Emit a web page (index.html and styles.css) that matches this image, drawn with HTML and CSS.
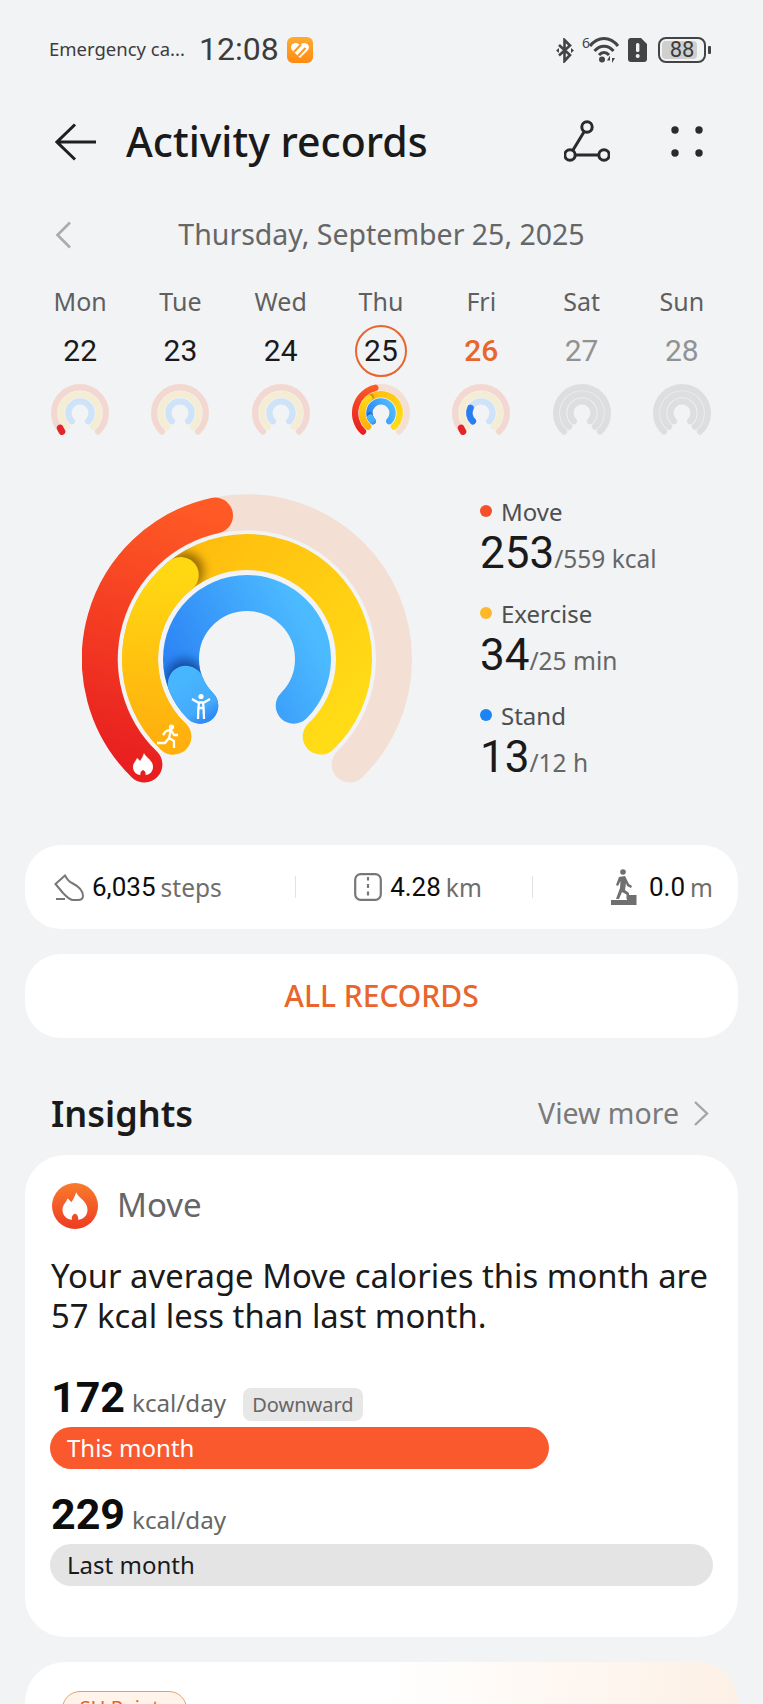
FILE: index.html
```html
<!DOCTYPE html>
<html lang="en">
<head>
    <meta charset="UTF-8">
    <meta name="viewport" content="width=device-width, initial-scale=1.0">
    <title>Activity records</title>
    <link rel="stylesheet" href="styles.css">
</head>
<body>
    <!-- Status bar -->
    <div class="status-bar">
        <span class="carrier">Emergency ca...</span>
        <span class="clock">12:08</span>
        <svg class="app-badge" viewBox="0 0 26 26">
            <defs>
                <linearGradient id="badgeFill" x1="0" y1="0" x2="0" y2="1">
                    <stop offset="0" stop-color="#ffab30"/>
                    <stop offset="1" stop-color="#ff8a12"/>
                </linearGradient>
            </defs>
            <rect width="26" height="26" rx="6" fill="url(#badgeFill)"/>
            <path d="M13 21 L5 13 C2.5 9.5 5.5 5.5 9 6 C11 6.2 12 7 13 8 C14 7 15.5 6 17.5 6 C21 6 23.5 10 21 13 Z" fill="#fff"/>
            <path d="M7 15 L14 7.5 M11 19 L18.5 11" stroke="#ff9a20" stroke-width="2.2"/>
        </svg>
        <div class="status-icons">
            <svg class="ic-bt" viewBox="0 0 18 25">
                <path d="M3 7 L14 17 L8.5 23 V2 L14 7.5 L3 17.5" fill="none" stroke="#444" stroke-width="2.6"/>
                <path d="M0 12.5 L3 10 V15 Z M18 12.5 L15 10 V15 Z" fill="#444"/>
            </svg>
            <svg class="ic-wifi" viewBox="0 0 36 26">
                <text x="0" y="11" class="wifi-six">6</text>
                <path d="M8 9 C16 -1 28 -1 36 9 M12.5 14 C18 7.5 26 7.5 31.5 14 M17 18 C20 14.5 24 14.5 27 18" fill="none" stroke="#444" stroke-width="3"/>
                <circle cx="20" cy="22.5" r="3" fill="#444"/>
                <path d="M28 18.5 L25 23.5 H28 Z M30 26 L33 21 H30 Z" fill="#444"/>
            </svg>
            <svg class="ic-sim" viewBox="0 0 19 24">
                <path d="M3 0 H13 L19 6 V21 C19 23 18 24 16 24 H3 C1 24 0 23 0 21 V3 C0 1 1 0 3 0 Z" fill="#444"/>
                <rect x="8" y="5" width="3.4" height="9" rx="1.5" fill="#f1f3f5"/>
                <circle cx="9.7" cy="18" r="2" fill="#f1f3f5"/>
            </svg>
            <div class="battery">
                <div class="battery-fill"></div>
                <span class="battery-num">88</span>
            </div>
            <div class="battery-nub"></div>
        </div>
    </div>

    <!-- Title bar -->
    <div class="title-bar">
        <svg class="ic-back" viewBox="0 0 42 38">
            <path d="M41 19 H2 M20 1.5 L2 19 L20 36.5" fill="none" stroke="#1f1f1f" stroke-width="3"/>
        </svg>
        <h1 class="title">Activity records</h1>
        <svg class="ic-route" viewBox="0 0 46 44">
            <path d="M23 7 L6 35 H40" fill="none" stroke="#2b2b2b" stroke-width="3"/>
            <circle cx="23" cy="7" r="5.2" fill="#f1f3f5" stroke="#2b2b2b" stroke-width="3"/>
            <circle cx="6" cy="35" r="5.2" fill="#f1f3f5" stroke="#2b2b2b" stroke-width="3"/>
            <circle cx="40" cy="35" r="5.2" fill="#f1f3f5" stroke="#2b2b2b" stroke-width="3"/>
        </svg>
        <svg class="ic-dots" viewBox="0 0 34 34">
            <circle cx="5" cy="5" r="3.7"/>
            <circle cx="29" cy="5" r="3.7"/>
            <circle cx="5" cy="28" r="3.7"/>
            <circle cx="29" cy="28" r="3.7"/>
        </svg>
    </div>

    <div class="date-row">
        <svg class="ic-prev" viewBox="0 0 17 28">
            <path d="M15 1.5 L2.5 14 L15 26.5" fill="none" stroke="#a9abad" stroke-width="2.6"/>
        </svg>
        <span class="date-text">Thursday, September 25, 2025</span>
    </div>

    <!-- Week strip -->
    <div class="week">
        <div class="day">
            <div class="day-name">Mon</div>
            <div class="day-num">22</div>
            <svg class="mini faint" viewBox="0 0 330 290">
                <use href="#ringBase"/>
                <path class="tip-red" d="M62.4 270.5 A147 147 0 0 1 52 250"/>
            </svg>
        </div>
        <div class="day">
            <div class="day-name">Tue</div>
            <div class="day-num">23</div>
            <svg class="mini faint" viewBox="0 0 330 290"><use href="#ringBase"/></svg>
        </div>
        <div class="day">
            <div class="day-name">Wed</div>
            <div class="day-num">24</div>
            <svg class="mini faint" viewBox="0 0 330 290"><use href="#ringBase"/></svg>
        </div>
        <div class="day">
            <div class="day-name">Thu</div>
            <div class="day-num today">25</div>
            <svg class="mini" viewBox="0 0 330 290"><use href="#ringLive"/></svg>
        </div>
        <div class="day">
            <div class="day-name">Fri</div>
            <div class="day-num next">26</div>
            <svg class="mini faint" viewBox="0 0 330 290">
                <use href="#ringBase"/>
                <path class="tip-red" d="M62.4 270.5 A147 147 0 0 1 52 250"/>
                <path class="tip-blue" d="M118.3 211.7 A66 66 0 0 1 105 137"/>
            </svg>
        </div>
        <div class="day">
            <div class="day-name">Sat</div>
            <div class="day-num later">27</div>
            <svg class="mini blank" viewBox="0 0 330 290"><use href="#ringBase"/></svg>
        </div>
        <div class="day">
            <div class="day-name">Sun</div>
            <div class="day-num later">28</div>
            <svg class="mini blank" viewBox="0 0 330 290"><use href="#ringBase"/></svg>
        </div>
    </div>

    <!-- Rings and goals -->
    <div class="activity">
        <svg class="rings" viewBox="0 0 330 290">
            <defs>
                <linearGradient id="redFill" gradientUnits="userSpaceOnUse" x1="60" y1="275" x2="135" y2="20">
                    <stop offset="0" stop-color="#e81f20"/>
                    <stop offset="1" stop-color="#ff5a25"/>
                </linearGradient>
                <linearGradient id="yellowBase" gradientUnits="userSpaceOnUse" x1="80" y1="70" x2="250" y2="240">
                    <stop offset="0" stop-color="#ffbb0e"/>
                    <stop offset="1" stop-color="#ffdc16"/>
                </linearGradient>
                <linearGradient id="yellowTop" gradientUnits="userSpaceOnUse" x1="90" y1="245" x2="100" y2="80">
                    <stop offset="0" stop-color="#ffb00e"/>
                    <stop offset="1" stop-color="#ffd812"/>
                </linearGradient>
                <linearGradient id="blueBase" gradientUnits="userSpaceOnUse" x1="85" y1="190" x2="220" y2="120">
                    <stop offset="0" stop-color="#2a80f4"/>
                    <stop offset="1" stop-color="#4cbaff"/>
                </linearGradient>
                <linearGradient id="blueTop" gradientUnits="userSpaceOnUse" x1="100" y1="185" x2="125" y2="225">
                    <stop offset="0" stop-color="#48b6ff"/>
                    <stop offset="0.75" stop-color="#43aafc"/>
                    <stop offset="1" stop-color="#2f8cf5"/>
                </linearGradient>
                <filter id="soft" x="-50%" y="-50%" width="200%" height="200%">
                    <feGaussianBlur stdDeviation="5"/>
                </filter>
                <mask id="midMask" maskUnits="userSpaceOnUse" x="0" y="0" width="330" height="290">
                    <circle cx="165" cy="165" r="107" fill="none" stroke="#fff" stroke-width="36"/>
                </mask>
                <mask id="innerMask" maskUnits="userSpaceOnUse" x="0" y="0" width="330" height="290">
                    <circle cx="165" cy="165" r="66" fill="none" stroke="#fff" stroke-width="36"/>
                </mask>
                <symbol id="ringBase" viewBox="0 0 330 290">
                    <path class="arc arc-outer" d="M62.4 270.5 A147 147 0 1 1 267.6 270.5"/>
                    <path class="arc arc-mid" d="M91.3 242.6 A107 107 0 1 1 238.7 242.6"/>
                    <path class="arc arc-inner" d="M118.3 211.7 A66 66 0 1 1 211.7 211.7"/>
                </symbol>
                <symbol id="ringLive" viewBox="0 0 330 290">
                    <path class="arc" stroke="#f3dfd3" d="M62.4 270.5 A147 147 0 1 1 267.6 270.5"/>
                    <path class="arc" stroke="url(#redFill)" d="M62.4 270.5 A147 147 0 0 1 133 21.5"/>
                    <path class="arc" stroke="url(#yellowBase)" d="M91.3 242.6 A107 107 0 1 1 238.7 242.6"/>
                    <g mask="url(#midMask)">
                        <circle cx="103" cy="77" r="19" fill="#7a5200" opacity="0.75" filter="url(#soft)"/>
                    </g>
                    <path class="arc" stroke="url(#yellowTop)" d="M91.3 242.6 A107 107 0 0 1 98.8 81"/>
                    <path class="arc" stroke="url(#blueBase)" d="M118.3 211.7 A66 66 0 1 1 211.7 211.7"/>
                    <g mask="url(#innerMask)">
                        <circle cx="103" cy="184" r="19" fill="#0a3f8f" opacity="0.8" filter="url(#soft)"/>
                    </g>
                    <path class="arc" stroke="url(#blueTop)" d="M118.3 211.7 A66 66 0 0 1 103.8 189.7"/>
                </symbol>
                <symbol id="flame" viewBox="-11 -12 22 24">
                    <path d="M1 -11 C3 -6 10 -4 10 3 C10 8 6 11 2.5 11 C3 8.5 2 7 0 6 C-2 7 -3 8.5 -2.5 11 C-6 11 -10 8 -10 3 C-10 -1 -7 -3 -6 -6 C-4.5 -5 -3.5 -3.5 -3 -3 C-1.5 -5 0 -8 1 -11 Z" fill="#fff"/>
                </symbol>
            </defs>
            <use href="#ringLive"/>
            <use href="#flame" x="50" y="258" width="22" height="24"/>
            <!-- runner -->
            <g class="figure" transform="translate(86 243)">
                <circle cx="3.5" cy="-10" r="2.6" class="figure-head"/>
                <path d="M-2 -6 L3 -7 L1 1 L6 4 L6 11 M1 1 L-3 6 L-11 6 M3 -7 L6 -2 L10 -2 M-2 -6 L-5 -2"/>
            </g>
            <!-- standing figure -->
            <g class="figure" transform="translate(119 213)">
                <circle cx="0" cy="-10.5" r="2.6" class="figure-head"/>
                <path d="M-9 -8 L-3 -4.5 H3 L9 -8 M-2 -4.5 L-2.6 1 L-3 12 M2 -4.5 L2.6 1 L3 12 M-2 1 H2"/>
            </g>
        </svg>
        <div class="legend">
            <div class="goal">
                <div class="goal-label"><span class="dot dot-move"></span>Move</div>
                <div class="goal-value">253<span class="goal-unit">/559 kcal</span></div>
            </div>
            <div class="goal">
                <div class="goal-label"><span class="dot dot-exercise"></span>Exercise</div>
                <div class="goal-value">34<span class="goal-unit">/25 min</span></div>
            </div>
            <div class="goal">
                <div class="goal-label"><span class="dot dot-stand"></span>Stand</div>
                <div class="goal-value">13<span class="goal-unit">/12 h</span></div>
            </div>
        </div>
    </div>

    <!-- Totals -->
    <div class="card stats">
        <div class="stat">
            <svg class="ic-shoe" viewBox="0 0 30 27">
                <path d="M1.5 10 L11 1.5 C13 5 15 8 18 9 C22 11 29 15 29 22 C29 25 27 26 24 26 H19 C15 26 12 22 9 19 Z M2 25 H11" fill="none" stroke="#777" stroke-width="2"/>
            </svg>
            <b>6,035</b><span>steps</span>
        </div>
        <div class="sep"></div>
        <div class="stat stat-mid">
            <svg class="ic-road" viewBox="0 0 28 28">
                <rect x="1.2" y="1.2" width="25.6" height="25.6" rx="5.5" fill="none" stroke="#777" stroke-width="2.2"/>
                <path d="M14 4 V7.5 M14 11 V15 M14 18.5 V22.5" stroke="#777" stroke-width="2.2"/>
            </svg>
            <b>4.28</b><span>km</span>
        </div>
        <div class="sep"></div>
        <div class="stat stat-end">
            <svg class="ic-stairs" viewBox="0 0 26 36">
                <circle cx="12" cy="3" r="2.8" fill="#6f6f6f"/>
                <path d="M8 8 L14 7 L18 15 L21 17 L20 19 L16 17 L15 14 L14 21 L18 24 V30 H15.5 V25.5 L11 23 L8 30 H5 L9 19 L9.5 12 L7 17 L5 16 Z" fill="#6f6f6f"/>
                <path d="M16 26 H25.5 V36 H0 V31 H16 Z" fill="#6f6f6f"/>
            </svg>
            <b>0.0</b><span>m</span>
        </div>
    </div>

    <div class="card all-records">ALL RECORDS</div>

    <div class="section-head">
        <h2 class="section-title">Insights</h2>
        <div class="view-more">
            View more
            <svg class="ic-next" viewBox="0 0 16 27">
                <path d="M2 2 L14 13.5 L2 25" fill="none" stroke="#a3a5a7" stroke-width="2.4"/>
            </svg>
        </div>
    </div>

    <!-- Insight card -->
    <div class="card insight">
        <div class="insight-head">
            <svg class="ic-move" viewBox="0 0 46 46">
                <defs>
                    <linearGradient id="moveFill" x1="0" y1="0" x2="0" y2="1">
                        <stop offset="0" stop-color="#f97b2d"/>
                        <stop offset="1" stop-color="#ee3b22"/>
                    </linearGradient>
                </defs>
                <circle cx="23" cy="23" r="23" fill="url(#moveFill)"/>
                <use href="#flame" x="9" y="8" width="28" height="30"/>
            </svg>
            <span class="insight-name">Move</span>
        </div>
        <p class="insight-text">Your average Move calories this month are 57 kcal less than last month.</p>
        <div class="figure-row">
            <span class="figure-num">172</span>
            <span class="figure-unit">kcal/day</span>
            <span class="tag">Downward</span>
        </div>
        <div class="bar bar-now">This month</div>
        <div class="figure-row">
            <span class="figure-num">229</span>
            <span class="figure-unit">kcal/day</span>
        </div>
        <div class="bar bar-last">Last month</div>
    </div>

    <div class="card promo">
        <span class="promo-tag">SU Points</span>
    </div>
</body>
</html>
```

FILE: styles.css
```css
* {
    box-sizing: border-box;
}

html, body {
    height: 1704px;
}

body {
    margin: 0;
    background-color: #f1f3f5;
    font-family: "Noto Sans", Roboto, sans-serif;
    color: #1a1a1a;
    overflow: hidden;
}

/* status bar */
.status-bar {
    display: flex;
    align-items: center;
    height: 100px;
    padding: 0 52px 0 49px;
    color: #3c3c3c;
}

.carrier {
    font-size: 18.5px;
    width: 150px;
    padding-bottom: 3px;
    white-space: nowrap;
}

.clock {
    font-family: Roboto, sans-serif;
    font-size: 32px;
    width: 88px;
    padding-bottom: 3px;
}

.app-badge {
    width: 26px;
    height: 26px;
}

.status-icons {
    display: flex;
    align-items: center;
    margin-left: auto;
}

.ic-bt {
    width: 18px;
    height: 25px;
    margin-right: 8px;
}

.ic-wifi {
    width: 36px;
    height: 26px;
    margin-right: 10px;
    overflow: visible;
}

.wifi-six {
    font-size: 14px;
    fill: #444;
}

.ic-sim {
    width: 19px;
    height: 24px;
    margin-right: 11px;
}

.battery {
    position: relative;
    display: flex;
    align-items: center;
    justify-content: center;
    width: 48px;
    height: 26px;
    border: 2.5px solid #444;
    border-radius: 8px;
}

.battery-fill {
    position: absolute;
    left: 2px;
    top: 2px;
    bottom: 2px;
    width: 35px;
    background-color: #cfcfcf;
    border-radius: 4px;
}

.battery-num {
    position: relative;
    font-family: Roboto, sans-serif;
    font-size: 22px;
    line-height: 1;
}

.battery-nub {
    width: 3px;
    height: 8px;
    margin-left: 2px;
    background-color: #444;
    border-radius: 1px;
}

/* title bar */
.title-bar {
    display: flex;
    align-items: center;
    height: 84px;
    padding: 0 59px 0 55px;
}

.ic-back {
    width: 42px;
    height: 38px;
    margin-right: 29px;
}

.title {
    margin: 0;
    padding-bottom: 2px;
    font-size: 41px;
    font-weight: 500;
}

.ic-route {
    width: 46px;
    height: 44px;
    margin-left: auto;
}

.ic-dots {
    width: 34px;
    height: 34px;
    margin-left: 60px;
    fill: #2b2b2b;
}

.date-row {
    display: flex;
    align-items: center;
    justify-content: space-between;
    height: 60px;
    margin-top: 21px;
    padding: 0 55px;
}

.date-row::after {
    content: "";
    width: 17px;
}

.ic-prev {
    width: 17px;
    height: 28px;
}

.date-text {
    padding-bottom: 2px;
    font-size: 28.5px;
    color: #666;
}

/* week strip */
.week {
    display: grid;
    grid-template-columns: repeat(7, 1fr);
    margin-top: 12px;
    padding: 0 31px 0 30px;
}

.day {
    display: flex;
    flex-direction: column;
    align-items: center;
}

.day-name {
    height: 48px;
    line-height: 49px;
    font-size: 25px;
    color: #5f5f5f;
}

.day-num {
    width: 52px;
    height: 52px;
    line-height: 52px;
    text-align: center;
    font-family: Roboto, sans-serif;
    font-size: 30px;
}

.day-num.today {
    border: 2px solid #e8652e;
    border-radius: 50%;
    line-height: 48px;
}

.day-num.next {
    font-weight: 500;
    color: #e8652e;
}

.day-num.later {
    color: #929292;
}

.mini {
    display: block;
    width: 58px;
    height: 51px;
    margin-top: 7px;
    --outer: #f3d8d1;
    --mid: #f5edd3;
    --inner: #cfe3f8;
}

.mini.blank {
    --outer: #dcdee0;
    --mid: #dcdee0;
    --inner: #dcdee0;
}

.arc {
    fill: none;
    stroke-width: 36;
    stroke-linecap: round;
}

.arc-outer {
    stroke: var(--outer);
}

.arc-mid {
    stroke: var(--mid);
}

.arc-inner {
    stroke: var(--inner);
}

.tip-red,
.tip-blue {
    fill: none;
    stroke-width: 38;
    stroke-linecap: round;
}

.tip-red {
    stroke: #e2252a;
}

.tip-blue {
    stroke: #2a7df0;
}

/* rings */
.activity {
    display: flex;
    align-items: flex-start;
    height: 349px;
    padding: 59px 0 0 82px;
    margin-bottom: 61px;
}

.rings {
    display: block;
    width: 330px;
    height: 290px;
    flex-shrink: 0;
}

.figure {
    fill: none;
    stroke: #fff;
    stroke-width: 2.3;
    stroke-linejoin: round;
}

.figure-head {
    fill: #fff;
    stroke: none;
}

.legend {
    margin-left: 68px;
}

.goal {
    margin-bottom: 20px;
}

.goal:last-child {
    margin-bottom: 0;
}

.goal-label {
    display: flex;
    align-items: center;
    height: 34px;
    font-size: 24px;
    color: #4f4f4f;
}

.dot {
    width: 12px;
    height: 12px;
    margin-right: 9px;
    border-radius: 50%;
}

.dot-move {
    background-color: #f5502a;
}

.dot-exercise {
    background-color: #fdb92a;
}

.dot-stand {
    background-color: #1c84f5;
}

.goal-value {
    height: 48px;
    line-height: 51px;
    font-family: Roboto, sans-serif;
    font-size: 44px;
}

.goal-unit {
    font-family: "Noto Sans", sans-serif;
    font-size: 24.5px;
    color: #666;
}

/* cards */
.card {
    margin: 0 25px;
    background-color: #fff;
    border-radius: 36px;
}

.stats {
    display: grid;
    grid-template-columns: 241px 1px 236px 1px 180px;
    align-items: center;
    height: 84px;
    padding-left: 29px;
}

.sep {
    height: 22px;
    background-color: #e2e3e5;
}

.stat {
    display: flex;
    align-items: center;
    font-size: 24.5px;
    color: #6e6e6e;
}

.stat b {
    font-family: Roboto, sans-serif;
    font-size: 26px;
    font-weight: 400;
    color: #0d0d0d;
    margin-right: 5px;
}

.stat-mid {
    justify-content: center;
    padding-left: 8px;
}

.stat-end {
    justify-content: flex-end;
}

.ic-shoe {
    width: 30px;
    height: 27px;
    margin-right: 8px;
}

.ic-road {
    width: 28px;
    height: 28px;
    margin-right: 8px;
}

.ic-stairs {
    width: 26px;
    height: 36px;
    margin-right: 12px;
}

.all-records {
    display: flex;
    align-items: center;
    justify-content: center;
    height: 84px;
    margin-top: 25px;
    padding-bottom: 2px;
    font-size: 30px;
    font-weight: 500;
    color: #e8652e;
}

.section-head {
    display: flex;
    align-items: center;
    justify-content: space-between;
    height: 52px;
    margin-top: 50px;
    padding: 0 54px 2px 51px;
}

.section-title {
    margin: 0;
    font-size: 36px;
    font-weight: 600;
}

.view-more {
    display: flex;
    align-items: center;
    font-size: 28.5px;
    color: #7a7a7a;
}

.ic-next {
    width: 16px;
    height: 27px;
    margin-left: 14px;
}

/* insight */
.insight {
    height: 482px;
    margin-top: 15px;
    padding: 28px 25px 0 25px;
    border-radius: 40px;
}

.insight-head {
    display: flex;
    align-items: center;
    height: 46px;
}

.ic-move {
    width: 46px;
    height: 46px;
    margin: 0 19px 0 2px;
}

.insight-name {
    padding-bottom: 3px;
    font-size: 33px;
    color: #666;
}

.insight-text {
    margin: 27px 0 0 1px;
    font-size: 32.8px;
    line-height: 39.5px;
}

.figure-row {
    display: flex;
    align-items: baseline;
    height: 50px;
    line-height: 41px;
    margin: 42px 0 0 1px;
}

.bar + .figure-row {
    margin-top: 25px;
}

.figure-num {
    font-family: Roboto, sans-serif;
    font-size: 43px;
    font-weight: 700;
    color: #0d0d0d;
    margin-right: 7px;
}

.figure-unit {
    font-size: 24.2px;
    color: #666;
}

.tag {
    height: 33px;
    line-height: 33px;
    margin-left: 17px;
    padding: 0 9px;
    font-size: 20px;
    color: #666;
    background-color: #e7e7e7;
    border-radius: 8px;
}

.bar {
    height: 42px;
    line-height: 42px;
    padding-left: 17px;
    border-radius: 21px;
    font-size: 24px;
}

.bar-now {
    width: 499px;
    background-color: #fa582d;
    color: #fff;
}

.bar-last {
    width: 663px;
    background-color: #e4e4e4;
}

/* next card, cut off by the screen */
.promo {
    height: 42px;
    margin-top: 25px;
    padding: 29px 0 0 37px;
    overflow: hidden;
    border-radius: 40px 40px 0 0;
    background: linear-gradient(100deg, #fff 50%, #fdf0e5 100%);
}

.promo-tag {
    display: block;
    width: 125px;
    height: 36px;
    line-height: 32px;
    text-align: center;
    font-size: 20px;
    color: #e8652e;
    background-color: #fff3ea;
    border: 1.5px solid #dba36f;
    border-radius: 18px;
}
```
